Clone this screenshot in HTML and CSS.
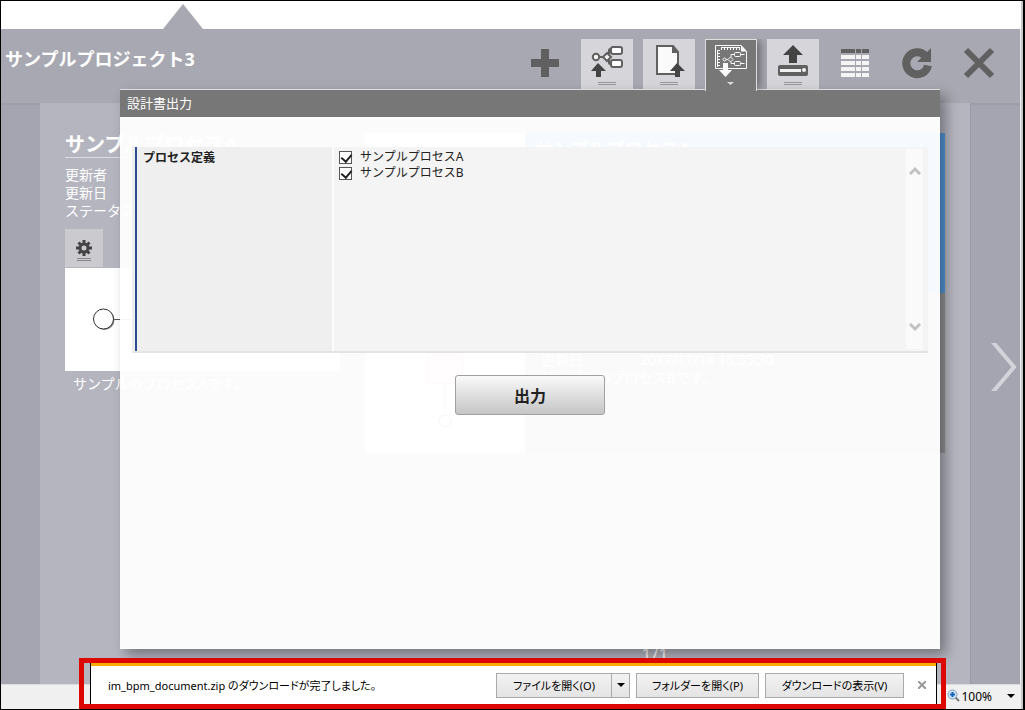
FILE: index.html
```html
<!DOCTYPE html>
<html lang="ja">
<head>
    <meta charset="UTF-8">
    <meta name="viewport" content="width=device-width, initial-scale=1.0">
    <title>サンプルプロジェクト3</title>
    <link rel="stylesheet" href="styles.css">
</head>
<body>
    <div class="window">
        <div class="strip"><div class="pointer"></div></div>

        <header class="header">
            <h1>サンプルプロジェクト3</h1>
            <div class="toolbar">
                <button class="tool" aria-label="追加">
                    <svg width="52" height="52" fill="#606060"><path d="M22 10h8v10h10v8H30v10h-8V28H12v-8h10z"/></svg>
                </button>
                <button class="tool tile" aria-label="プロセス登録">
                    <svg width="52" height="52" fill="none" stroke="#606060" stroke-width="2">
                        <path d="M18 18h4M28 16V11q0-1 2-1M28 20v4q0 1 2 1"/>
                        <circle cx="15" cy="18" r="3.2" fill="#f4f4f4"/>
                        <path d="M26 14l4 4-4 4-4-4z" fill="#f4f4f4"/>
                        <rect x="30" y="8" width="11" height="7" rx="2" fill="#fff"/>
                        <rect x="30" y="21" width="11" height="7" rx="2" fill="#fff"/>
                        <path d="M17 24l8 8h-5v6h-5v-6h-5z" fill="#444" stroke="none"/>
                        <path d="M17 43.500h18M17 45.500h18" stroke="#999" stroke-width="1"/>
                    </svg>
                </button>
                <button class="tool tile" aria-label="ファイル登録">
                    <svg width="52" height="52">
                        <path d="M14 7h16l5 6v22H14z" fill="#fafafa" stroke="#606060" stroke-width="2"/>
                        <path d="M29 6h1l6 7v1h-7z" fill="#606060"/>
                        <path d="M34 24l8 8h-5v6h-5v-6h-5z" fill="#444"/>
                        <path d="M17 43.500h18M17 45.500h18" stroke="#999"/>
                    </svg>
                </button>
                <button class="tool active" aria-label="設計書出力">
                    <svg width="50" height="51" viewBox="1 1 50 51" fill="none" stroke="#fafafa">
                        <path d="M10.500 6.500H36l5.500 6v17h-31z"/>
                        <path d="M36 6l6 6.500h-6z" fill="#fafafa" stroke="none"/>
                        <path d="M16 8.500h19" stroke-width="1"/>
                        <path d="M16 10h19" stroke-width="2" stroke-dasharray="1 2"/>
                        <path d="M12.500 11v17"/>
                        <path d="M14 11v17" stroke-width="2" stroke-dasharray="1 2"/>
                        <circle cx="19.500" cy="20.500" r="1.500"/>
                        <path d="M21 20.500h2M25.500 18l2.500 2.500-2.500 2.500-2.500-2.500zM26 18v-2.500h3M26 23v1.500h3M35.500 15.500h4M35.500 24.500h4"/>
                        <rect x="29.500" y="13.500" width="6" height="4" rx="1"/>
                        <rect x="29.500" y="22.500" width="6" height="4" rx="1"/>
                        <path d="M18 24h5v7h4l-6.500 7-6.500-7h4z" fill="#fafafa" stroke="none"/>
                        <path d="M22 43h7l-3.500 3z" fill="#ddd" stroke="none"/>
                    </svg>
                </button>
                <button class="tool tile" aria-label="アップロード">
                    <svg width="52" height="52">
                        <path d="M26 6l10 10h-6v8h-8v-8h-6z" fill="#444"/>
                        <rect x="11" y="26" width="30" height="11" rx="2" fill="#606060"/>
                        <path d="M13 30h21v3H13z" fill="#f0f0f0"/>
                        <circle cx="37" cy="31" r="2" fill="#f0f0f0"/>
                        <path d="M17 43.500h18M17 45.500h18" stroke="#999"/>
                    </svg>
                </button>
                <button class="tool" aria-label="一覧">
                    <svg width="52" height="52" stroke-width="4">
                        <path d="M12 12h14M27 12h5M33 12h7" stroke="#606060"/>
                        <path d="M12 18h14m1 0h5m1 0h7M12 24h14m1 0h5m1 0h7M12 30h14m1 0h5m1 0h7M12 36h14m1 0h5m1 0h7" stroke="#f4f4f4"/>
                    </svg>
                </button>
                <button class="tool" aria-label="更新">
                    <svg width="52" height="52">
                        <path d="M37 26.500A11 11 0 1 1 34 16.500" fill="none" stroke="#606060" stroke-width="8"/>
                        <path d="M40 9v14H26z" fill="#606060"/>
                    </svg>
                </button>
                <button class="tool" aria-label="閉じる">
                    <svg width="52" height="52" stroke="#606060" stroke-width="6"><path d="M13 11l26 26M39 11L13 37"/></svg>
                </button>
            </div>
        </header>

        <main class="content">
            <div class="side"></div>
            <div class="cards">
                <div class="card-row">
                    <section class="card-a">
                        <h2>サンプルプロセスA</h2>
                        <ul class="labels">
                            <li>更新者</li>
                            <li>更新日</li>
                            <li>ステータス</li>
                        </ul>
                        <button class="gear" aria-label="設定">
                            <svg width="38" height="38">
                                <g stroke="#444" stroke-width="3">
                                    <path d="M19 11v16M11 19h16M13.500 13.500l11 11M24.500 13.500l-11 11"/>
                                </g>
                                <circle cx="19" cy="19" r="4" fill="#cacacf" stroke="#444" stroke-width="3"/>
                                <path d="M12 29.500h14M12 31.500h14" stroke="#888"/>
                            </svg>
                        </button>
                        <svg class="thumb" width="100%" height="103">
                            <path d="M49 51.500h60" stroke="#555"/>
                            <circle cx="39.500" cy="52" r="10" fill="#888"/>
                            <circle cx="38.500" cy="51" r="10" fill="#fff" stroke="#333"/>
                        </svg>
                        <p>サンプルのプロセスAです。</p>
                    </section>
                    <section class="card-b">
                        <svg class="diagram" width="160" height="320">
                            <path d="M80.500 180v100" stroke="#999"/>
                            <rect x="62.500" y="222.500" width="35" height="28" rx="2" fill="#ffd8e0" stroke="#d08090"/>
                            <circle cx="80" cy="288" r="6" fill="#fff" stroke="#333" stroke-width="1"/>
                        </svg>
                        <div class="card-info">
                            <div class="info-head"><h2>サンプルプロセスA</h2></div>
                            <div class="info-body">
                                <dl>
                                    <dt>更新日</dt>
                                    <dd>2017/11/14 15:35:30</dd>
                                </dl>
                                <p>サンプルのプロセスBです。</p>
                            </div>
                        </div>
                    </section>
                </div>
                <div class="pager">1/1</div>
            </div>
            <div class="side side-right">
                <button class="next" aria-label="次へ">
                    <svg width="26" height="48" fill="none" stroke="#d3d3da" stroke-width="4"><path d="M1 -2l22 26L1 50"/></svg>
                </button>
            </div>
        </main>

        <footer class="statusbar">
            <svg width="14" height="14">
                <path d="M8 8l4 4" stroke="#777" stroke-width="2"/>
                <circle cx="5.500" cy="5.500" r="4.500" fill="#cfe4f7" stroke="#7f9fbd"/>
                <path d="M5.500 3v5M3 5.500h5" stroke="#1565b8" stroke-width="2"/>
            </svg>
            <span>100%</span>
            <button class="zoom-menu" aria-label="拡大レベル"><span class="caret"></span></button>
        </footer>

        <section class="dialog" role="dialog" aria-labelledby="dialog-title">
            <h2 class="dialog-title" id="dialog-title">設計書出力</h2>
            <form class="dialog-body">
                <table class="form-table">
                    <tr>
                        <th scope="row">プロセス定義</th>
                        <td>
                            <div class="list">
                                <div class="options">
                                    <label><input type="checkbox" checked>サンプルプロセスA</label>
                                    <label><input type="checkbox" checked>サンプルプロセスB</label>
                                </div>
                                <div class="scroll">
                                    <svg width="12" height="9" fill="none" stroke="#c2c2c2" stroke-width="3"><path d="M1 8l5-5 5 5"/></svg>
                                    <svg width="12" height="9" fill="none" stroke="#c2c2c2" stroke-width="3"><path d="M1 1l5 5 5-5"/></svg>
                                </div>
                            </div>
                        </td>
                    </tr>
                </table>
                <button type="button" class="output">出力</button>
            </form>
        </section>

        <div class="highlight">
            <div class="download">
                <span class="message">im_bpm_document.zip のダウンロードが完了しました。</span>
                <div class="split">
                    <button class="btn btn-open">ファイルを開く(O)</button>
                    <button class="btn btn-arrow" aria-label="その他"><span class="caret"></span></button>
                </div>
                <button class="btn btn-folder">フォルダーを開く(P)</button>
                <button class="btn btn-show">ダウンロードの表示(V)</button>
                <button class="dismiss" aria-label="閉じる">
                    <svg width="8" height="8" stroke="#999" stroke-width="2"><path d="M0 0l8 8M8 0L0 8"/></svg>
                </button>
            </div>
        </div>
    </div>
</body>
</html>
```

FILE: styles.css
```css
* {
    box-sizing: border-box;
}

body {
    margin: 0;
    background-color: #000;
    font-family: "Noto Sans", "Noto Sans CJK JP", sans-serif;
    font-size: 12px;
    color: #222;
}

h1, h2, p, ul, dl, dd {
    margin: 0;
    padding: 0;
}

button {
    padding: 0;
    border: none;
    background: none;
    font-family: inherit;
    color: inherit;
    cursor: pointer;
}

svg {
    display: block;
}

.window {
    position: relative;
    display: flex;
    flex-direction: column;
    min-height: 100vh;
    padding-right: 2px;
    border: 1px solid #000;
    border-right-width: 2px;
    background-color: #c8c8c8;
}

/* top strip and header */
.strip {
    display: flex;
    align-items: flex-end;
    height: 28px;
    background-color: #fff;
}

.pointer {
    margin-left: 162px;
    border: 20px solid transparent;
    border-top: none;
    border-bottom: 25px solid #a8a8b2;
}

.header {
    display: flex;
    justify-content: space-between;
    height: 74px;
    padding: 10px 15px 0 4px;
    border-right: 1px solid #eee;
    background-color: #a8a8b2;
}

.header h1 {
    padding-top: 8px;
    font-size: 18px;
    line-height: 24px;
    color: #fff;
}

.toolbar {
    display: flex;
    gap: 10px;
}

.tool {
    width: 52px;
    height: 52px;
}

.tile {
    background-color: #d5d5da;
}

.active {
    position: relative;
    z-index: 3;
    border: 1px solid #ddd;
    border-bottom: none;
    background-color: #777;
    box-shadow: 5px -1px 8px -2px rgba(0, 0, 0, 0.4);
    clip-path: inset(0 -10px 0 0);
}

/* process cards */
.content {
    display: flex;
    flex: 1;
    border-right: 1px solid #eee;
    color: #fff;
}

.side {
    width: 39px;
    border-top: 2px solid #9e9eaa;
    background-color: #a5a5b1;
}

.side-right {
    width: 50px;
    border-left: 1px solid #9a9aa6;
}

.next {
    margin: 238px 0 0 20px;
}

.cards {
    display: flex;
    flex: 1;
    flex-direction: column;
    min-width: 0;
    padding: 30px 25px 18px;
    background-color: #b5b5c0;
}

.card-row {
    display: flex;
    gap: 25px;
}

.card-a {
    flex: 275;
    min-width: 0;
}

.card-a h2 {
    margin-bottom: 8px;
    border-bottom: 1px solid #dcdce2;
    font-size: 20px;
    line-height: 24px;
}

.labels {
    list-style: none;
    font-size: 14px;
    line-height: 18px;
}

.gear {
    display: block;
    margin: 9px 0 1px;
    background-color: #cacacf;
}

.thumb {
    background-color: #fff;
}

.card-a p {
    padding: 4px 8px;
    font-size: 14px;
    line-height: 18px;
}

.card-b {
    display: flex;
    flex: 580;
    min-width: 0;
}

.diagram {
    flex: none;
    background-color: #fff;
}

.card-info {
    display: grid;
    flex: 1;
    grid-template-rows: 1fr 1fr;
}

.info-head {
    padding: 4px 10px;
    background-color: #5599dd;
}

.info-head h2 {
    font-size: 18px;
    line-height: 24px;
}

.info-body {
    padding: 58px 16px 0;
    background-color: #96969b;
    font-size: 14px;
    line-height: 18px;
}

.info-body dl {
    display: flex;
}

.info-body dt {
    width: 99px;
}

.pager {
    margin-top: auto;
    padding-left: 300px;
    text-align: center;
    font-size: 18px;
    line-height: 24px;
}

/* dialog */
.dialog {
    position: absolute;
    z-index: 2;
    top: 88px;
    right: 83px;
    bottom: 60px;
    left: 119px;
    border-top: 1px solid #ddd;
    background-color: rgba(255, 255, 255, 0.95);
    box-shadow: 6px 6px 12px rgba(0, 0, 0, 0.35);
}

.dialog-title {
    padding: 0 7px;
    background-color: #777;
    font-size: 13px;
    font-weight: normal;
    line-height: 27px;
    color: #fff;
}

.dialog-body {
    padding: 30px 12px 0;
}

.form-table {
    width: 100%;
    border-collapse: separate;
    border-spacing: 0;
    border-left: 3px solid #eee;
    border-bottom: 2px solid #e3e3e3;
}

.form-table th {
    width: 199px;
    padding: 3px 6px;
    border-left: 2px solid #2c4d92;
    border-right: 2px solid #fcfcfc;
    background-color: #efefef;
    text-align: left;
    vertical-align: top;
    line-height: 16px;
}

.form-table td {
    padding: 2px 5px;
    background-color: #f4f4f4;
}

.list {
    display: flex;
    justify-content: space-between;
    height: 200px;
}

.options label {
    display: flex;
    align-items: center;
    gap: 8px;
    line-height: 16px;
}

.options input {
    appearance: none;
    width: 13px;
    height: 13px;
    margin: 0;
    border: 1px solid #555;
    background-color: #fff;
}

.options input:checked::before {
    content: "";
    display: block;
    width: 5px;
    height: 8px;
    margin: 0 0 0 3px;
    border: solid #222;
    border-width: 0 2px 2px 0;
    transform: rotate(40deg);
}

.scroll {
    display: flex;
    flex-direction: column;
    align-items: center;
    justify-content: space-between;
    width: 17px;
    padding: 17px 0;
    background-color: #fafafa;
}

.output {
    display: block;
    width: 150px;
    height: 40px;
    margin: 22px auto 0;
    border: 1px solid #a0a0a0;
    border-radius: 3px;
    background-image: linear-gradient(#fafafa, #c5c5c5);
    font-size: 16px;
    font-weight: bold;
}

/* browser bars */
.statusbar {
    display: flex;
    align-items: center;
    justify-content: flex-end;
    height: 25px;
    padding: 0 6px 2px 0;
    border-top: 1px solid #ddd;
    background-color: #f0f0f0;
    color: #000;
}

.zoom-menu {
    margin-left: 15px;
}

.caret {
    display: block;
    border: 4px solid transparent;
    border-top-color: #000;
    border-bottom: none;
}

.highlight {
    position: absolute;
    z-index: 4;
    right: 77px;
    bottom: 0;
    left: 78px;
    padding: 0 4px 0 6px;
    border: 5px solid #dc0800;
}

.download {
    display: flex;
    align-items: center;
    gap: 6px;
    height: 41px;
    padding: 3px 10px 0 17px;
    border: solid #000;
    border-width: 0 1px;
    background-color: #fff;
    background-image: linear-gradient(#f8ac00, #f8ac00);
    background-repeat: no-repeat;
    background-size: 100% 3px;
    font-size: 11px;
    color: #000;
    font-feature-settings: "palt";
}

.message {
    flex: 1;
}

.split {
    display: flex;
}

.btn {
    height: 25px;
    border: 1px solid #aaa;
    background-image: linear-gradient(#f2f2f2, #e4e4e4);
    font-size: 11px;
    font-feature-settings: inherit;
    white-space: nowrap;
}

.btn-open {
    width: 116px;
}

.btn-arrow {
    display: flex;
    align-items: center;
    justify-content: center;
    width: 18px;
    border-left: none;
}

.btn-folder {
    width: 123px;
}

.btn-show {
    width: 139px;
}

.dismiss {
    margin-left: 8px;
}
```
